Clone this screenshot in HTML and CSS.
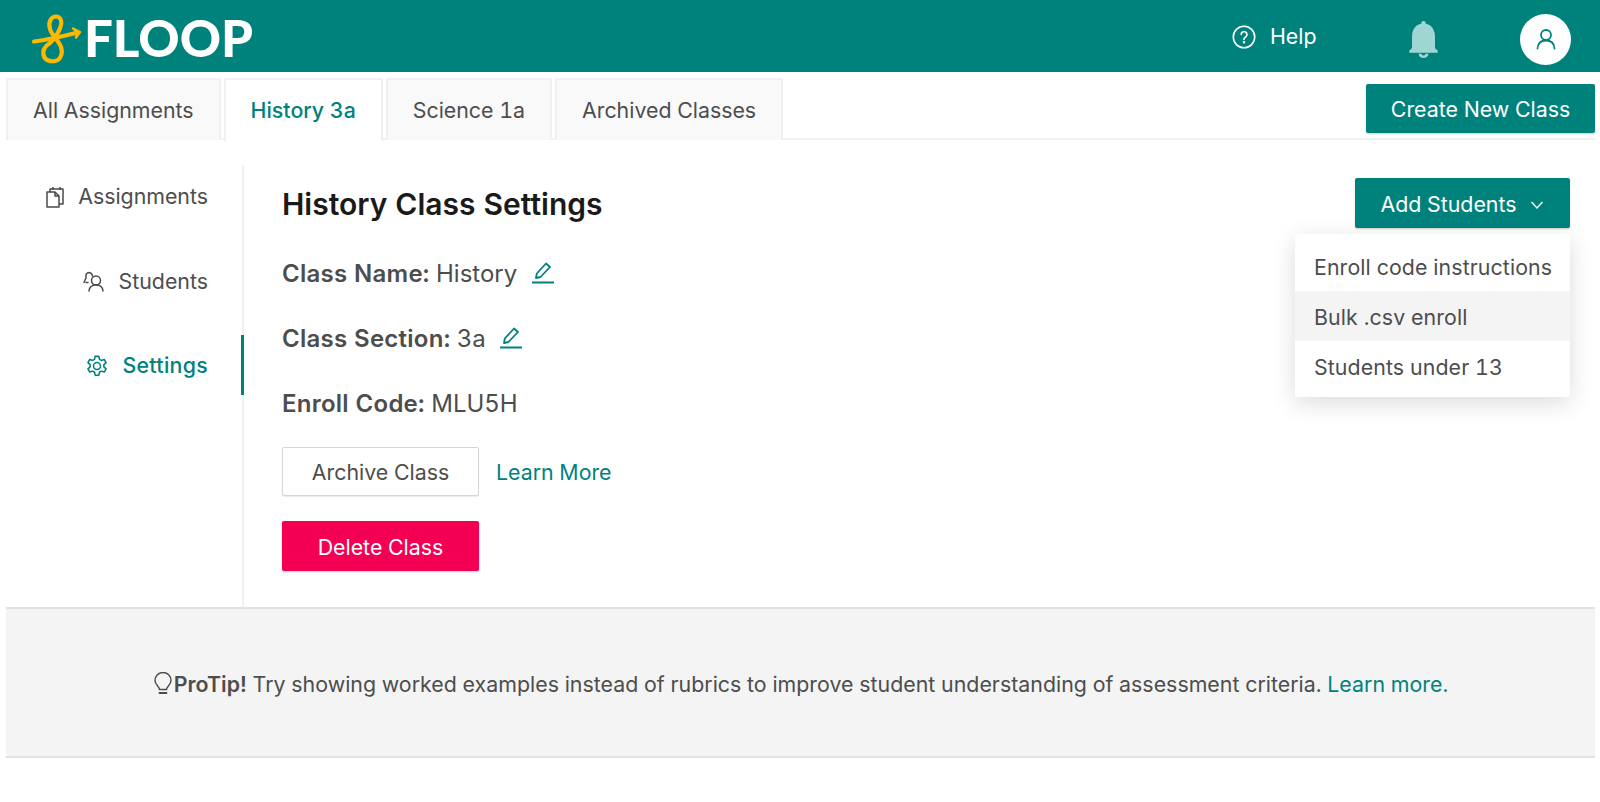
FILE: index.html
```html
<!DOCTYPE html>
<html lang="en">
<head>
<meta charset="utf-8">
<title>Floop</title>
<link rel="stylesheet" href="styles.css">
</head>
<body>
<header class="topbar">
  <div class="brand">
    <svg class="brand-mark" width="56" height="56" viewBox="28 10 56 56" fill="none" stroke="#ffb800" stroke-width="4.2" stroke-linecap="round" stroke-linejoin="round">
      <path d="M34 41.500C46 40 64 36 78 32.500"/>
      <path d="M73 28.500L80 32L76 37.500" fill="#ffb800" stroke-width="2.500"/>
      <path d="M50 43C45 46 42.500 50 43.500 55C44.500 60 50 62 55 61C61 60 63 53 61 47C59 41 52 36 50 29C48 22 51 16.500 56 16.500C61 16.500 62.500 22 60.500 27C58.500 33 54 39 50 43Z"/>
    </svg>
    <span class="wordmark">FLOOP</span>
  </div>
  <div class="top-actions">
    <a class="help">
      <svg width="24" height="24" viewBox="0 0 24 24" fill="none" stroke="#fff" stroke-width="1.600" stroke-linecap="round"><circle cx="12" cy="12" r="10.700"/><path d="M9.200 9.500a2.900 2.900 0 1 1 4.500 2.400c-1.100.8-1.700 1.300-1.700 2.500"/><circle cx="12" cy="17.200" r=".5" fill="#fff"/></svg>
      <span>Help</span>
    </a>
    <svg class="bell" width="29" height="37" viewBox="0 0 29 37" fill="#9dd6d2"><path d="M14.500 0a2 2 0 0 1 2 2.600C22.500 4 25.700 8.500 26 15V26c0 1.500 1 2.500 2.200 3 .8.300.8 2.800-.2 2.800H1c-1 0-1-2.500-.2-2.800C2 28.500 3 27.500 3 26V15C3.300 8.500 6.500 4 12.500 2.600A2 2 0 0 1 14.500 0z"/><path d="M9.500 32.800h10a5 4.200 0 0 1-10 0zm3 0a2 1.800 0 0 0 4 0z" fill-rule="evenodd"/></svg>
    <div class="avatar">
      <svg width="24" height="24" viewBox="0 0 24 24" fill="none" stroke="#00827c" stroke-width="1.800" stroke-linecap="round"><circle cx="12" cy="8" r="5"/><path d="M3.500 21.500c.3-5 3.500-8 8.500-8s8.200 3 8.500 8"/></svg>
    </div>
  </div>
</header>

<nav class="tabbar">
  <a class="tab">All Assignments</a>
  <a class="tab tab-active">History 3a</a>
  <a class="tab">Science 1a</a>
  <a class="tab">Archived Classes</a>
  <button class="btn btn-primary btn-create">Create New Class</button>
</nav>

<div class="content">
  <aside class="sidebar">
    <a class="side-item">
      <svg width="18" height="22" viewBox="0 0 18 22" fill="none" stroke="#4a4a4a" stroke-width="1.500" stroke-linejoin="round"><path d="M1 6h8l4 4v11H1z"/><path d="M9 6v4h4"/><path d="M4 6V3h13v15h-4"/><path d="M7 1v3M14 1v3"/></svg>
      <span>Assignments</span>
    </a>
    <a class="side-item">
      <svg width="22" height="22" viewBox="0 0 22 22" fill="none" stroke="#4a4a4a" stroke-width="1.500" stroke-linecap="round"><circle cx="13" cy="9.500" r="4.500"/><path d="M6 20c.3-4 3-6 7-6s6.700 2 7 6"/><path d="M9.500 5A4 4 0 0 0 6 1.500C3.500 1.500 2.500 4 3 7L1 11.500M3 11.500H5"/></svg>
      <span>Students</span>
    </a>
    <a class="side-item side-active">
      <svg width="22" height="22" viewBox="0 0 24 24" fill="none" stroke="#00827c" stroke-width="1.700" stroke-linejoin="round"><circle cx="12" cy="12" r="3.800"/><path d="M10 1.500h4l.7 3.200 2.100 1.200 3.100-1 2 3.400-2.400 2.200v2.500l2.400 2.200-2 3.400-3.100-1-2.100 1.200-.7 3.200h-4l-.7-3.200-2.100-1.200-3.100 1-2-3.400 2.400-2.200V10.500L2.100 8.300l2-3.400 3.100 1 2.100-1.200z"/></svg>
      <span>Settings</span>
    </a>
  </aside>

  <main class="panel">
    <div class="panel-head">
      <h1 class="title">History Class Settings</h1>
      <div class="add-wrap">
        <button class="btn btn-primary btn-add">
          <span>Add Students</span>
          <svg width="14" height="8" viewBox="0 0 14 8" fill="none" stroke="#fff" stroke-width="1.300"><path d="M1.500 1L7 7l5.500-6"/></svg>
        </button>
        <ul class="menu">
          <li class="menu-item">Enroll code instructions</li>
          <li class="menu-item menu-hover">Bulk .csv enroll</li>
          <li class="menu-item">Students under 13</li>
        </ul>
      </div>
    </div>
    <p class="field"><b>Class Name:</b> History <svg class="edit" width="24" height="24" viewBox="0 0 24 24" fill="none" stroke="#00827c" stroke-width="1.800" stroke-linejoin="round"><path d="M5 17l.8-4.500L15 2.500l4 3.500-9.500 10z"/><path d="M1 21.500h22" stroke-width="2"/></svg></p>
    <p class="field"><b>Class Section:</b> 3a <svg class="edit" width="24" height="24" viewBox="0 0 24 24" fill="none" stroke="#00827c" stroke-width="1.800" stroke-linejoin="round"><path d="M5 17l.8-4.500L15 2.500l4 3.500-9.500 10z"/><path d="M1 21.500h22" stroke-width="2"/></svg></p>
    <p class="field"><b>Enroll Code:</b> MLU5H</p>
    <div class="row-archive">
      <button class="btn btn-outline">Archive Class</button>
      <a class="link">Learn More</a>
    </div>
    <button class="btn btn-danger">Delete Class</button>
  </main>
</div>

<footer class="protip">
  <svg width="20" height="26" viewBox="0 0 20 26" fill="none" stroke="#4a4a4a" stroke-width="1.400" stroke-linecap="round"><path d="M6.500 17.500c0-3-4.500-4.500-4.500-9A8 8 0 0 1 18 8.500c0 4.500-4.500 6-4.500 9z"/><path d="M6.500 21h7" stroke-width="1.800"/></svg>
  <p class="tip-text"><b>ProTip!</b> Try showing worked examples instead of rubrics to improve student understanding of assessment criteria. <a class="link">Learn more.</a></p>
</footer>
</body>
</html>
```

FILE: styles.css
```css
* { box-sizing: border-box; }
html, body { margin: 0; padding: 0; }
body {
  background: #fff;
  color: #4d4d4d;
  font-family: "Inter", "Liberation Sans", sans-serif;
  font-size: 21.33px;
  font-variant-numeric: tabular-nums;
  line-height: 1.2;
}
a { color: inherit; text-decoration: none; }
svg { display: block; flex: none; }

.topbar {
  height: 72px;
  background: #00827c;
  display: flex;
  align-items: center;
  justify-content: space-between;
  padding: 6px 29px 0 28px;
}
.brand { display: flex; align-items: center; margin-top: -2px; }
.wordmark {
  color: #fff;
  font-family: "Lato", sans-serif;
  font-weight: 900;
  font-size: 51px;
  line-height: 1;
  margin-top: -2px;
}
.top-actions { display: flex; align-items: center; }
.help {
  width: 134px;
  height: 50px;
  display: flex;
  align-items: center;
  gap: 14px;
  padding-left: 24px;
  margin-top: -4px;
  color: #fff;
  border-radius: 4px;
  box-shadow: 0 1px 1px rgba(0, 0, 0, .03);
}
.bell { margin: 0 82px 0 67px; }
.avatar {
  width: 51px;
  height: 51px;
  border-radius: 50%;
  background: #fff;
  display: flex;
  align-items: center;
  justify-content: center;
}

.tabbar {
  height: 68px;
  margin: 0 5px 0 6px;
  padding-top: 6px;
  display: flex;
  gap: 3px;
  border-bottom: 2px solid #f0f0f0;
}
.tab {
  height: 62px;
  display: flex;
  align-items: center;
  padding: 1px 25px 0;
  background: #f9f9f9;
  border: 2px solid #f0f0f0;
  border-bottom: 0;
  border-radius: 2px 2px 0 0;
}
.tab-active {
  height: 63px;
  background: #fff;
  color: #00827c;
  font-weight: 500;
}

.btn {
  height: 50px;
  border: 0;
  border-radius: 2px;
  font: inherit;
  padding: 3px 0 0;
  cursor: pointer;
  box-shadow: 0 1px 2px rgba(0, 0, 0, .2);
}
.btn-primary { background: #00827c; color: #fff; }
.btn-create { width: 229px; margin: 6px 0 0 auto; height: 49px; padding-top: 2px; }

.content { display: flex; height: 467px; padding: 25px 0 0 6px; }
.sidebar {
  width: 238px;
  height: 442px;
  border-right: 2px solid #f0f0f0;
  padding: 8px 34px 0 0;
  display: flex;
  flex-direction: column;
  gap: 36.500px;
}
.side-item {
  height: 48px;
  display: flex;
  align-items: center;
  justify-content: flex-end;
  gap: 14px;
}
.side-active {
  color: #00827c;
  font-weight: 500;
  letter-spacing: .3px;
  position: relative;
}
.side-active::after {
  content: "";
  position: absolute;
  right: -36px;
  top: -7px;
  width: 3px;
  height: 60px;
  background: #00827c;
}

.panel { flex: 1; padding: 13px 30px 0 38px; }
.panel-head { display: flex; justify-content: space-between; align-items: flex-start; height: 50px; }
.title {
  margin: 0;
  color: #1a1a1a;
  font-size: 30px;
  font-weight: 600;
  line-height: 52px;
}
.add-wrap { position: relative; }
.btn-add {
  width: 215px;
  display: flex;
  align-items: center;
  justify-content: center;
  gap: 14px;
}
.menu {
  position: absolute;
  top: 56px;
  right: 0;
  width: 275px;
  margin: 0;
  padding: 7px 0 6px;
  list-style: none;
  background: #fff;
  border-radius: 2px;
  box-shadow: 0 6px 24px rgba(0, 0, 0, .14);
}
.menu-item { height: 50px; display: flex; align-items: center; padding: 3px 0 0 19px; letter-spacing: .1px; }
.menu-hover { background: #f4f4f4; }

.field { margin: 0; height: 30px; line-height: 30px; font-size: 24px; }
.panel-head + .field { margin-top: 31px; }
.field + .field { margin-top: 35px; }
.field b { font-weight: 600; letter-spacing: .25px; }
.edit { display: inline-block; vertical-align: -3px; margin-left: 7px; }

.row-archive { display: flex; align-items: center; gap: 17px; margin-top: 28px; }
.btn-outline {
  width: 197px;
  height: 49px;
  background: #fff;
  color: #4d4d4d;
  border: 1.500px solid #d6d6d6;
  box-shadow: 0 1px 1px rgba(0, 0, 0, .08);
}
.link { color: #00827c; }
.row-archive .link { padding-top: 2px; }
.btn-danger { display: block; width: 197px; height: 50px; margin-top: 25px; background: #f30054; color: #fff; }

.protip {
  margin: 0 5px 0 6px;
  height: 151px;
  padding-top: 4px;
  background: #f4f4f4;
  border-top: 2px solid #e2e2e2;
  border-bottom: 2px solid #e2e2e2;
  display: flex;
  align-items: center;
  justify-content: center;
  gap: 1px;
}
.tip-text { margin: 0; letter-spacing: .02px; }
.tip-text b { font-weight: 600; }
```
